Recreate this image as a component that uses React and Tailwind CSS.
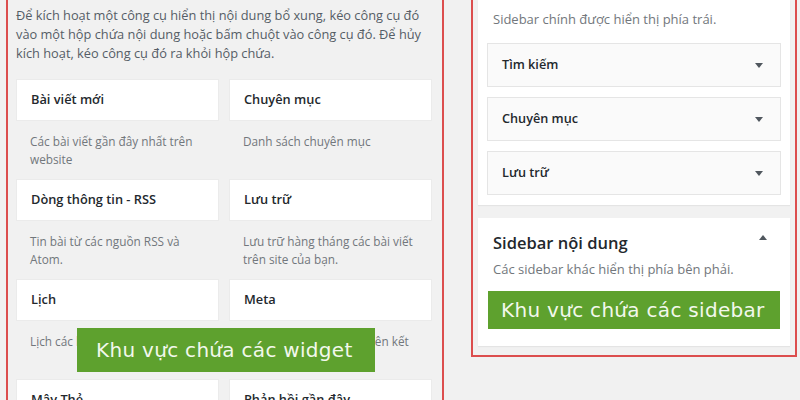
import React from "react";

const widgets = [
  { name: "Bài viết mới", desc: "Các bài viết gần đây nhất trên website" },
  { name: "Chuyên mục", desc: "Danh sách chuyên mục" },
  { name: "Dòng thông tin - RSS", desc: "Tin bài từ các nguồn RSS và Atom." },
  { name: "Lưu trữ", desc: "Lưu trữ hàng tháng các bài viết trên site của bạn." },
  { name: "Lịch", desc: "Lịch các bài viết trên site." },
  { name: "Meta", desc: "Đăng nhập, RSS và các liên kết WordPress.org." },
  { name: "Mây Thẻ", desc: "Những thẻ được sử dụng nhiều nhất." },
  { name: "Phản hồi gần đây", desc: "Các phản hồi mới nhất trên site." }
];

const sidebarItems = ["Tìm kiếm", "Chuyên mục", "Lưu trữ"];

function WidgetCell({ name, desc }) {
  return (
    <div className="flex flex-col">
      <div className="h-[42px] flex items-center pl-[14px] bg-white border border-[#ebebeb] text-[12.8px] font-semibold text-[#23282d]">
        {name}
      </div>
      <p className="h-[58px] pt-[11px] pl-[14px] pr-[10px] text-[11.8px] leading-[18px] text-[#72777c]">
        {desc}
      </p>
    </div>
  );
}

function DownArrow() {
  return (
    <span className="w-0 h-0 border-x-[4px] border-x-transparent border-t-[5px] border-t-[#50575e]" />
  );
}

export default function App() {
  return (
    <div className="w-[800px] h-[400px] overflow-hidden bg-[#f1f1f1] flex items-start font-['Open_Sans',sans-serif]">
      {/* widget area */}
      <div className="relative ml-[6px] w-[438px] h-[400px] border-x-2 border-[#dc4e4e] pl-[8px] pr-[10px] pt-[6px]">
        <p className="text-[12.8px] leading-[19px] text-[#555d66]">
          Để kích hoạt một công cụ hiển thị nội dung bổ xung, kéo công cụ đó
          vào một hộp chứa nội dung hoặc bấm chuột vào công cụ đó. Để hủy
          kích hoạt, kéo công cụ đó ra khỏi hộp chứa.
        </p>
        <div className="grid grid-cols-2 gap-x-[10px] mt-[16px]">
          {widgets.map((w) => (
            <WidgetCell key={w.name} name={w.name} desc={w.desc} />
          ))}
        </div>
        <div className="absolute left-[69px] top-[328px] w-[298px] h-[44px] bg-[#5ea12e] flex items-center pl-[19px] text-[20px] tracking-[0.3px] text-[#f2f8ec] font-['DejaVu_Sans',sans-serif]">
          Khu vực chứa các widget
        </div>
      </div>

      {/* sidebar area */}
      <div className="ml-[27px] w-[326px] h-[357px] border-x-2 border-b-2 border-[#dc4e4e] px-[5px]">
        <div className="bg-white shadow-[0_1px_1px_rgba(0,0,0,0.05)] px-[9px] pt-[10px] pb-[10px]">
          <p className="pl-[6px] text-[13px] leading-[19px] text-[#72777c]">
            Sidebar chính được hiển thị phía trái.
          </p>
          <div className="mt-[14px] flex flex-col gap-[10px]">
            {sidebarItems.map((item) => (
              <div
                key={item}
                className="h-[44px] flex items-center justify-between pl-[14px] pr-[17px] bg-[#fafafa] border border-[#e5e5e5] text-[12.7px] font-semibold text-[#23282d]"
              >
                {item}
                <DownArrow />
              </div>
            ))}
          </div>
        </div>

        <div className="mt-[13px] bg-white shadow-[0_1px_1px_rgba(0,0,0,0.05)] px-[10px] pt-[13px] pb-[17px]">
          <div className="flex justify-between items-start pl-[5px] pr-[13px]">
            <h3 className="text-[16.5px] leading-[24px] font-semibold text-[#23282d]">
              Sidebar nội dung
            </h3>
            <span className="mt-[4px] w-0 h-0 border-x-[4px] border-x-transparent border-b-[5px] border-b-[#50575e]" />
          </div>
          <p className="mt-[5px] pl-[5px] text-[13px] leading-[19px] text-[#72777c]">
            Các sidebar khác hiển thị phía bên phải.
          </p>
          <div className="mt-[12px] h-[38px] bg-[#5ea12e] flex items-center pl-[13px] text-[20px] tracking-[0.3px] text-[#f2f8ec] font-['DejaVu_Sans',sans-serif]">
            Khu vực chứa các sidebar
          </div>
        </div>
      </div>
    </div>
  );
}
